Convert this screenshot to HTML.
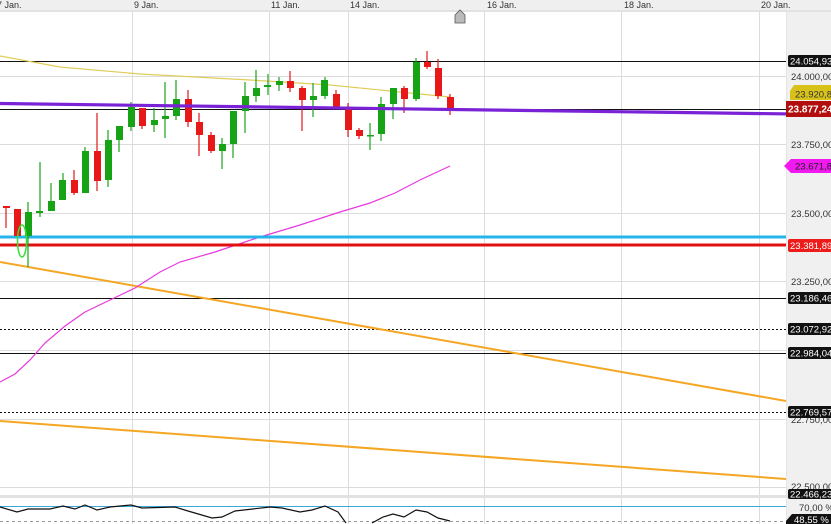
<!DOCTYPE html>
<html><head><meta charset="utf-8"><style>
html,body{margin:0;padding:0;background:#fff;}
svg{display:block;font-family:"Liberation Sans",Arial,sans-serif;}
</style></head><body>
<svg width="831" height="524" viewBox="0 0 831 524" xmlns="http://www.w3.org/2000/svg">
<rect x="0" y="0" width="831" height="524" fill="#fff"/>
<!-- axis bg -->
<rect x="786" y="10" width="45" height="514" fill="#f0f0f0"/>
<line x1="786.5" y1="10" x2="786.5" y2="524" stroke="#e4e4e4"/>
<!-- header -->
<rect x="0" y="0" width="831" height="10" fill="#efefef"/>
<rect x="0" y="10" width="831" height="2" fill="#e2e2e2"/>
<g font-size="9" fill="#333">
<text x="-3" y="8">7 Jan.</text><text x="134" y="8">9 Jan.</text><text x="271" y="8">11 Jan.</text>
<text x="350" y="8">14 Jan.</text><text x="487" y="8">16 Jan.</text><text x="624" y="8">18 Jan.</text><text x="761" y="8">20 Jan.</text>
</g>
<path d="M455 23 L455 15 L460 10 L465 15 L465 23 Z" fill="#bbb" stroke="#555" stroke-width="0.8"/>
<!-- grid -->
<g stroke="#dcdcdc" stroke-width="1">
<line x1="132.5" y1="12" x2="132.5" y2="524"/><line x1="269.5" y1="12" x2="269.5" y2="524"/>
<line x1="348.5" y1="12" x2="348.5" y2="524"/><line x1="484.5" y1="12" x2="484.5" y2="524"/>
<line x1="621.5" y1="12" x2="621.5" y2="524"/><line x1="759.5" y1="12" x2="759.5" y2="524"/>
<line x1="0" y1="76.5" x2="786" y2="76.5"/><line x1="0" y1="144.5" x2="786" y2="144.5"/>
<line x1="0" y1="213.5" x2="786" y2="213.5"/><line x1="0" y1="281.5" x2="786" y2="281.5"/>
<line x1="0" y1="350.5" x2="786" y2="350.5"/><line x1="0" y1="419.5" x2="786" y2="419.5"/>
<line x1="0" y1="487.5" x2="786" y2="487.5"/>
</g>
<!-- horizontal levels -->
<line x1="0" y1="61.5" x2="786" y2="61.5" stroke="#111"/>
<line x1="0" y1="109.5" x2="786" y2="109.5" stroke="#111"/>
<line x1="0" y1="298.5" x2="786" y2="298.5" stroke="#111"/>
<line x1="0" y1="329.5" x2="786" y2="329.5" stroke="#111" stroke-dasharray="2,2"/>
<line x1="0" y1="353.5" x2="786" y2="353.5" stroke="#111"/>
<line x1="0" y1="412.5" x2="786" y2="412.5" stroke="#111" stroke-dasharray="2,2"/>
<!-- yellow trend -->
<polyline points="0,56 60,67 140,74 250,80 330,85 450,97" fill="none" stroke="#e0cc5a" stroke-width="1.2"/>
<!-- orange -->
<line x1="0" y1="262" x2="786" y2="401" stroke="#f5a623" stroke-width="2"/>
<line x1="0" y1="421" x2="786" y2="479" stroke="#f5a623" stroke-width="2"/>
<!-- magenta MA -->
<polyline points="0,382 15,374 30,360 45,343 65,326 85,312 110,300 135,288 160,272 180,262 215,252 260,237 300,225 340,212 370,203 395,193 420,180 450,166" fill="none" stroke="#e838e0" stroke-width="1.2"/>
<!-- cyan / red -->
<line x1="0" y1="237" x2="786" y2="237" stroke="#26b5ea" stroke-width="3"/>
<line x1="0" y1="245" x2="786" y2="245" stroke="#e01010" stroke-width="3"/>
<!-- candles -->
<g id="c">
<g stroke="#1aa31a" stroke-width="1.2">
<line x1="28" y1="202" x2="28" y2="267"/><line x1="40" y1="162" x2="40" y2="217"/><line x1="51" y1="183" x2="51" y2="211"/>
<line x1="63" y1="173" x2="63" y2="200"/><line x1="85" y1="147" x2="85" y2="193"/><line x1="108" y1="130" x2="108" y2="187"/>
<line x1="119" y1="126" x2="119" y2="152"/><line x1="131" y1="102" x2="131" y2="131"/><line x1="154" y1="108" x2="154" y2="132"/>
<line x1="165" y1="82" x2="165" y2="138"/><line x1="176" y1="80" x2="176" y2="120"/><line x1="222" y1="138" x2="222" y2="169"/>
<line x1="233" y1="111" x2="233" y2="158"/><line x1="245" y1="82" x2="245" y2="133"/><line x1="256" y1="70" x2="256" y2="102"/>
<line x1="268" y1="74" x2="268" y2="95"/><line x1="279" y1="77" x2="279" y2="91"/><line x1="313" y1="83" x2="313" y2="117"/>
<line x1="325" y1="77" x2="325" y2="99"/><line x1="370" y1="123" x2="370" y2="150"/><line x1="381" y1="97" x2="381" y2="141"/>
<line x1="393" y1="88" x2="393" y2="119"/><line x1="416" y1="58" x2="416" y2="101"/>
</g>
<g fill="#16a316">
<rect x="25" y="212" width="7" height="24"/><rect x="36" y="211" width="7" height="2"/><rect x="48" y="201" width="7" height="10"/>
<rect x="59" y="180" width="7" height="20"/><rect x="82" y="151" width="7" height="42"/><rect x="105" y="140" width="7" height="40"/>
<rect x="116" y="126" width="7" height="14"/><rect x="128" y="107" width="7" height="20"/><rect x="151" y="120" width="7" height="5"/>
<rect x="162" y="116" width="7" height="3"/><rect x="173" y="99" width="7" height="17"/><rect x="219" y="144" width="7" height="7"/>
<rect x="230" y="111" width="7" height="33"/><rect x="242" y="96" width="7" height="15"/><rect x="253" y="88" width="7" height="8"/>
<rect x="264" y="85" width="7" height="2"/><rect x="276" y="81" width="7" height="4"/><rect x="310" y="96" width="7" height="4"/>
<rect x="321" y="80" width="7" height="16"/><rect x="367" y="135" width="7" height="1.5"/><rect x="378" y="104" width="7" height="30"/>
<rect x="390" y="88" width="7" height="16"/><rect x="413" y="62" width="7" height="37"/>
</g>
<g stroke="#e01818" stroke-width="1.2">
<line x1="6" y1="206" x2="6" y2="228"/><line x1="74" y1="170" x2="74" y2="195"/><line x1="97" y1="113" x2="97" y2="191"/>
<line x1="142" y1="108" x2="142" y2="129"/><line x1="188" y1="90" x2="188" y2="127"/><line x1="199" y1="113" x2="199" y2="156"/>
<line x1="211" y1="132" x2="211" y2="153"/><line x1="290" y1="71" x2="290" y2="92"/><line x1="302" y1="86" x2="302" y2="131"/>
<line x1="336" y1="90" x2="336" y2="108"/><line x1="348" y1="103" x2="348" y2="137"/><line x1="359" y1="128" x2="359" y2="139"/>
<line x1="404" y1="86" x2="404" y2="113"/><line x1="427" y1="51" x2="427" y2="69"/><line x1="438" y1="59" x2="438" y2="99"/>
<line x1="450" y1="94" x2="450" y2="115"/>
</g>
<g fill="#e81818">
<rect x="3" y="206" width="7" height="2"/><rect x="14" y="209" width="7" height="27"/><rect x="71" y="180" width="7" height="13"/>
<rect x="94" y="151" width="7" height="30"/><rect x="139" y="108" width="7" height="18"/><rect x="185" y="99" width="7" height="23"/>
<rect x="196" y="122" width="7" height="13"/><rect x="208" y="135" width="7" height="16"/><rect x="287" y="81" width="7" height="7"/>
<rect x="299" y="88" width="7" height="12"/><rect x="333" y="94" width="7" height="14"/><rect x="345" y="109" width="7" height="21"/>
<rect x="356" y="130" width="7" height="6"/><rect x="401" y="88" width="7" height="11"/><rect x="424" y="62" width="7" height="5"/>
<rect x="435" y="68" width="7" height="28"/><rect x="447" y="97" width="7" height="13"/>
</g>
</g>
<!-- purple thick line -->
<line x1="0" y1="103.5" x2="831" y2="114.5" stroke="#7a22d6" stroke-width="3.2"/>
<!-- ellipse -->
<ellipse cx="22" cy="241" rx="4.5" ry="16" fill="none" stroke="#33e033" stroke-width="1.5"/>
<!-- indicator panel -->
<rect x="0" y="495" width="831" height="3" fill="#e2e2e2"/>
<line x1="0" y1="506.5" x2="786" y2="506.5" stroke="#3aa8d8"/>
<line x1="0" y1="521.5" x2="786" y2="521.5" stroke="#999" stroke-dasharray="3,3"/>
<polyline points="0,507 17,512 28,509 50,509 63,506 75,509 85,505 97,510 110,507 131,505 142,508 175,507 188,511 212,518 222,517 235,511 270,507 282,508 300,512 312,510 325,506 338,512 346,523" fill="none" stroke="#111" stroke-width="1.2"/>
<polyline points="372,523 383,517 393,514 404,517 416,510 427,512 438,518 450,521" fill="none" stroke="#111" stroke-width="1.2"/>
<!-- axis labels -->
<g font-size="9.5" fill="#333">
<text x="791" y="80">24.000,00</text><text x="791" y="148">23.750,00</text><text x="791" y="217">23.500,00</text>
<text x="791" y="285">23.250,00</text><text x="791" y="423">22.750,00</text><text x="791" y="490">22.500,00</text>
<text x="799" y="511">70,00 %</text>
</g>
<!-- tags -->
<g font-size="9.5">
<rect x="788" y="55" width="45" height="12" rx="2" fill="#111"/><text x="790" y="64.5" fill="#fff">24.054,93</text>
<path d="M790 91 L794 85 L831 85 L831 100 L790 100 Z" fill="#d8c21a"/><text x="795" y="97.5" fill="#333">23.920,8</text>
<rect x="786" y="101" width="45" height="16" fill="#b30e0e"/><text x="788" y="112.5" fill="#fff" font-weight="bold" font-size="10">23.877,24</text>
<path d="M784 166 L791 159 L831 159 L831 173 L791 173 Z" fill="#f019f0"/><text x="795" y="169.5" fill="#222">23.671,8</text>
<rect x="788" y="239" width="45" height="13" rx="2" fill="#ee1b1b"/><text x="790" y="249" fill="#fff">23.381,89</text>
<rect x="788" y="292" width="45" height="12" rx="2" fill="#111"/><text x="790" y="301.5" fill="#fff">23.186,46</text>
<rect x="788" y="323" width="45" height="12" rx="2" fill="#111"/><text x="790" y="332.5" fill="#fff">23.072,92</text>
<rect x="788" y="347" width="45" height="12" rx="2" fill="#111"/><text x="790" y="356.5" fill="#fff">22.984,04</text>
<rect x="788" y="406" width="45" height="12" rx="2" fill="#111"/><text x="790" y="415.5" fill="#fff">22.769,57</text>
<rect x="788" y="489" width="45" height="10" rx="2" fill="#111"/><text x="790" y="497.5" fill="#fff">22.466,23</text>
<path d="M786 521 L792 514 L831 514 L831 524 L786 524 Z" fill="#111"/><text x="794" y="523" fill="#fff">48,55 %</text>
</g>
</svg>
</body></html>
